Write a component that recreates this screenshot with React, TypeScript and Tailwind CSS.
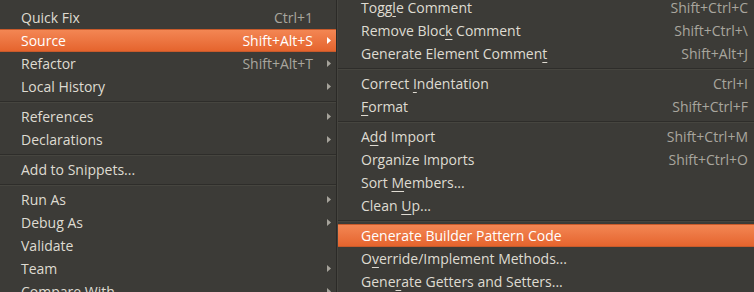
import React from 'react';

type Item =
  | { kind: 'sep' }
  | { kind: 'item'; label: React.ReactNode; shortcut?: string; submenu?: boolean; active?: boolean };

const sep: Item = { kind: 'sep' };

// underline the mnemonic letter
const m = (before: string, key: string, after: string) => (
  <>
    {before}
    <span className="underline underline-offset-[3px] decoration-1">{key}</span>
    {after}
  </>
);

const mainItems: Item[] = [
  { kind: 'item', label: 'Quick Fix', shortcut: 'Ctrl+1' },
  { kind: 'item', label: 'Source', shortcut: 'Shift+Alt+S', submenu: true, active: true },
  { kind: 'item', label: 'Refactor', shortcut: 'Shift+Alt+T', submenu: true },
  { kind: 'item', label: 'Local History', submenu: true },
  sep,
  { kind: 'item', label: 'References', submenu: true },
  { kind: 'item', label: 'Declarations', submenu: true },
  sep,
  { kind: 'item', label: 'Add to Snippets...' },
  sep,
  { kind: 'item', label: 'Run As', submenu: true },
  { kind: 'item', label: 'Debug As', submenu: true },
  { kind: 'item', label: 'Validate' },
  { kind: 'item', label: 'Team', submenu: true },
  { kind: 'item', label: 'Compare With', submenu: true },
];

const sourceItems: Item[] = [
  { kind: 'item', label: m('Togg', 'l', 'e Comment'), shortcut: 'Shift+Ctrl+C' },
  { kind: 'item', label: m('Remove Bloc', 'k', ' Comment'), shortcut: 'Shift+Ctrl+\\' },
  { kind: 'item', label: m('Generate Element Commen', 't', ''), shortcut: 'Shift+Alt+J' },
  sep,
  { kind: 'item', label: m('Correct ', 'I', 'ndentation'), shortcut: 'Ctrl+I' },
  { kind: 'item', label: m('', 'F', 'ormat'), shortcut: 'Shift+Ctrl+F' },
  sep,
  { kind: 'item', label: m('A', 'd', 'd Import'), shortcut: 'Shift+Ctrl+M' },
  { kind: 'item', label: 'Organize Imports', shortcut: 'Shift+Ctrl+O' },
  { kind: 'item', label: m('Sort ', 'M', 'embers...') },
  { kind: 'item', label: m('Clean ', 'U', 'p...') },
  sep,
  { kind: 'item', label: 'Generate Builder Pattern Code', active: true },
  { kind: 'item', label: m('O', 'v', 'erride/Implement Methods...') },
  { kind: 'item', label: m('Gene', 'r', 'ate Getters and Setters...') },
];

function Separator() {
  return (
    <div className="h-[7px] flex flex-col justify-center">
      <div className="h-px bg-[#2e2d2a]" />
      <div className="h-px bg-[#46453f]" />
    </div>
  );
}

function Arrow({ active }: { active?: boolean }) {
  return (
    <svg width="4" height="7" viewBox="0 0 4 7" className="block">
      <path d="M0 0 L4 3.5 L0 7 Z" fill={active ? '#ffffff' : '#a6a39b'} />
    </svg>
  );
}

function Row({ item, sub }: { item: Extract<Item, { kind: 'item' }>; sub?: boolean }) {
  const base = item.active
    ? 'bg-gradient-to-b from-[#f38653] to-[#e5642d] border-y border-[#c85a2b] text-white'
    : 'text-[#dfdbd2]';
  return (
    <div className={`h-[23px] flex items-center ${sub ? 'pl-[23px] pr-[6px]' : 'pl-[21px]'} ${base}`}>
      <span className="whitespace-nowrap">{item.label}</span>
      {item.shortcut && (
        <span className={`ml-auto whitespace-nowrap ${item.active ? 'text-white' : 'text-[#a9a69e]'}`}>
          {item.shortcut}
        </span>
      )}
      {!sub && (
        <span className={`w-[15px] flex justify-center ${item.shortcut ? 'ml-[8px]' : 'ml-auto'}`}>
          {item.submenu && <Arrow active={item.active} />}
        </span>
      )}
    </div>
  );
}

export default function App() {
  return (
    <div
      className="w-[754px] h-[292px] overflow-hidden bg-[#3c3b37] flex text-[14px]"
      style={{ fontFamily: '"Open Sans", "Noto Sans", sans-serif' }}
    >
      <div className="w-[337px] shrink-0 pt-[6px] border-r border-[#2b2a27]">
        {mainItems.map((it, i) =>
          it.kind === 'sep' ? <Separator key={i} /> : <Row key={i} item={it} />
        )}
      </div>
      <div className="flex-1 -mt-[4px] border-l border-[#45443f]">
        {sourceItems.map((it, i) =>
          it.kind === 'sep' ? <Separator key={i} /> : <Row key={i} item={it} sub />
        )}
      </div>
    </div>
  );
}
